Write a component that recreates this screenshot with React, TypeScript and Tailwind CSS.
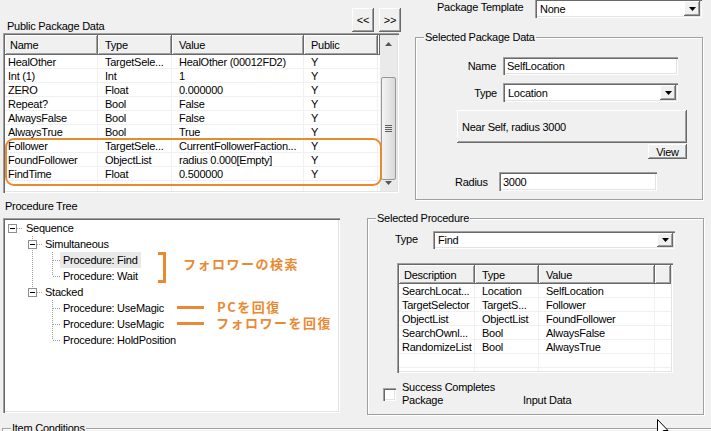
import React from "react";

// classic win32 bevels
const raised =
  "shadow-[inset_-1px_-1px_0_#696969,inset_1px_1px_0_#ffffff,inset_-2px_-2px_0_#a0a0a0]";
const sunken =
  "shadow-[inset_1px_1px_0_#a0a0a0,inset_2px_2px_0_#696969,inset_-1px_-1px_0_#ffffff,inset_-2px_-2px_0_#e3e3e3]";

type Col = { label: string; w: string };

const packageCols: Col[] = [
  { label: "Name", w: "w-[93px]" },
  { label: "Type", w: "w-[74px]" },
  { label: "Value", w: "w-[132px]" },
  { label: "Public", w: "w-[74px]" },
];

const packageRows = [
  ["HealOther", "TargetSele...", "HealOther (00012FD2)", "Y"],
  ["Int (1)", "Int", "1", "Y"],
  ["ZERO", "Float", "0.000000", "Y"],
  ["Repeat?", "Bool", "False", "Y"],
  ["AlwaysFalse", "Bool", "False", "Y"],
  ["AlwaysTrue", "Bool", "True", "Y"],
  ["Follower", "TargetSele...", "CurrentFollowerFaction...", "Y"],
  ["FoundFollower", "ObjectList", "radius 0.000[Empty]", "Y"],
  ["FindTime", "Float", "0.500000", "Y"],
  ["", "", "", ""],
];

const procCols: Col[] = [
  { label: "Description", w: "w-[76px]" },
  { label: "Type", w: "w-[64px]" },
  { label: "Value", w: "w-[116px]" },
];

const procRows = [
  ["SearchLocat...", "Location", "SelfLocation"],
  ["TargetSelector", "TargetS...", "Follower"],
  ["ObjectList", "ObjectList", "FoundFollower"],
  ["SearchOwnl...", "Bool", "AlwaysFalse"],
  ["RandomizeList", "Bool", "AlwaysTrue"],
  ["", "", ""],
  ["", "", ""],
];

const tree = [
  { label: "Sequence", lvl: 0 },
  { label: "Simultaneous", lvl: 1 },
  { label: "Procedure: Find", lvl: 2, sel: true },
  { label: "Procedure: Wait", lvl: 2 },
  { label: "Stacked", lvl: 1 },
  { label: "Procedure: UseMagic", lvl: 2 },
  { label: "Procedure: UseMagic", lvl: 2 },
  { label: "Procedure: HoldPosition", lvl: 2 },
];
const treePad = ["pl-[18px]", "pl-[37px]", "pl-[55px]"];

function Tri({ up = false, color = "#000000" }: { up?: boolean; color?: string }) {
  return (
    <svg width="7" height="4" viewBox="0 0 7 4">
      <path d={up ? "M0 4h7L3.5 0z" : "M0 0h7L3.5 4z"} fill={color} />
    </svg>
  );
}

function Btn({ className = "", children }: { className?: string; children: React.ReactNode }) {
  return (
    <div className={`flex items-center justify-center bg-[#f0f0f0] ${raised} ${className}`}>
      {children}
    </div>
  );
}

function Field({ value, className = "" }: { value: string; className?: string }) {
  return (
    <div className={`flex items-center bg-white p-[2px] pl-[4px] ${sunken} ${className}`}>
      {value}
    </div>
  );
}

function Combo({ value, className = "" }: { value: string; className?: string }) {
  return (
    <div className={`flex bg-white p-[2px] ${sunken} ${className}`}>
      <span className="flex flex-1 items-center pl-[3px]">{value}</span>
      <span className={`flex w-[16px] items-center justify-center bg-[#f0f0f0] ${raised}`}>
        <Tri />
      </span>
    </div>
  );
}

function Group({
  label,
  className = "",
  children,
}: {
  label: string;
  className?: string;
  children?: React.ReactNode;
}) {
  return (
    <div
      className={`flex flex-col border border-[#a0a0a0] shadow-[inset_1px_1px_0_#ffffff,1px_1px_0_#ffffff] ${className}`}
    >
      <div className="-mt-[8px] ml-[8px] w-fit bg-[#f0f0f0] px-[1px]">{label}</div>
      {children}
    </div>
  );
}

function ScrollBar() {
  return (
    <div className="flex w-[17px] flex-col bg-[#eaeaea]">
      <div className="flex h-[17px] items-center justify-center">
        <Tri up color="#555555" />
      </div>
      <div className="mt-[25px] flex h-[103px] items-center justify-center rounded-[2px] border border-[#979797] bg-gradient-to-r from-[#f4f4f4] to-[#d9d9d9] mx-[1px]">
        <div className="flex flex-col gap-[1px]">
          <div className="h-[1px] w-[7px] bg-[#5f5f5f]" />
          <div className="h-[1px] w-[7px] bg-[#5f5f5f]" />
          <div className="h-[1px] w-[7px] bg-[#5f5f5f]" />
          <div className="h-[1px] w-[7px] bg-[#5f5f5f]" />
        </div>
      </div>
      <div className="flex flex-1 justify-center pt-[1px]">
        <Tri color="#555555" />
      </div>
    </div>
  );
}

function ListView({
  cols,
  rows,
  headH,
  scroll = false,
  className = "",
}: {
  cols: Col[];
  rows: string[][];
  headH: string;
  scroll?: boolean;
  className?: string;
}) {
  return (
    <div className={`flex bg-white p-[2px] ${sunken} ${className}`}>
      <div className="flex flex-1 flex-col overflow-hidden">
        <div className={`flex shrink-0 ${headH}`}>
          {cols.map((c, i) => (
            <div
              key={i}
              className={`flex items-center overflow-hidden whitespace-nowrap bg-[#f0f0f0] ${raised} ${c.w} ${
                i === 0 ? "pl-[5px]" : "pl-[7px]"
              }`}
            >
              {c.label}
            </div>
          ))}
          <div className={`flex-1 bg-[#f0f0f0] ${raised}`} />
        </div>
        {rows.map((r, ri) => (
          <div key={ri} className="flex h-[14px] shrink-0">
            {cols.map((c, i) => (
              <div
                key={i}
                className={`flex items-center overflow-hidden whitespace-nowrap border-r border-b border-[#f0f0f0] ${c.w} ${
                  i === 0 ? "pl-[3px]" : "pl-[7px]"
                }`}
              >
                {r[i]}
              </div>
            ))}
            <div className="flex-1 border-b border-[#f0f0f0]" />
          </div>
        ))}
      </div>
      {scroll && <ScrollBar />}
    </div>
  );
}

function TreeLines() {
  const boxes = [
    { a: 3, cy: 8 },
    { a: 23, cy: 24 },
    { a: 23, cy: 72 },
  ];
  const dot = { stroke: "#a0a0a0", strokeWidth: 1, strokeDasharray: "1 1" };
  return (
    <svg className="pointer-events-none absolute left-0 top-0" width="60" height="130">
      <line x1="12" y1="8.5" x2="18" y2="8.5" {...dot} />
      <line x1="27.5" y1="16" x2="27.5" y2="72" {...dot} />
      <line x1="32" y1="24.5" x2="38" y2="24.5" {...dot} />
      <line x1="32" y1="72.5" x2="38" y2="72.5" {...dot} />
      <line x1="47.5" y1="32" x2="47.5" y2="56" {...dot} />
      <line x1="47.5" y1="80" x2="47.5" y2="120" {...dot} />
      {[40, 56, 88, 104, 120].map((y) => (
        <line key={y} x1="48" y1={y + 0.5} x2="55" y2={y + 0.5} {...dot} />
      ))}
      {boxes.map((b, i) => (
        <g key={i}>
          <rect x={b.a + 0.5} y={b.cy - 3.5} width="8" height="8" fill="#ffffff" stroke="#8e8e8e" />
          <line x1={b.a + 2} y1={b.cy + 0.5} x2={b.a + 7} y2={b.cy + 0.5} stroke="#000000" />
        </g>
      ))}
    </svg>
  );
}

export default function App() {
  const jp =
    "absolute whitespace-nowrap font-['Noto_Sans_CJK_JP',sans-serif] text-[13px] leading-[14px] font-bold tracking-[1.5px] text-[#e98a32]";
  return (
    <div className="relative h-[431px] w-[711px] overflow-hidden bg-[#f0f0f0] font-['Liberation_Sans',Arial,sans-serif] text-[11px] leading-[14px] tracking-[-0.25px] text-black">
      {/* upper half */}
      <div className="flex h-[200px]">
        <div className="flex w-[402px] flex-col">
          <div className="flex h-[33px]">
            <span className="pl-[7px] pt-[19px]">Public Package Data</span>
            <div className="ml-auto mr-[1px] mt-[8px] flex gap-[5px]">
              <Btn className="h-[24px] w-[22px]">&lt;&lt;</Btn>
              <Btn className="h-[24px] w-[22px]">&gt;&gt;</Btn>
            </div>
          </div>
          <ListView
            cols={packageCols}
            rows={packageRows}
            headH="h-[20px]"
            scroll
            className="ml-[3px] h-[160px] w-[396px]"
          />
        </div>

        <div className="flex flex-1 flex-col">
          <div className="-mt-[1px] flex h-[19px]">
            <span className="ml-[35px] mt-[1px]">Package Template</span>
            <Combo value="None" className="ml-auto mr-[9px] h-[19px] w-[167px]" />
          </div>
          <Group label="Selected Package Data" className="ml-[13px] mt-[19px] h-[163px] w-[288px]">
            <div className="ml-[41px] mt-[13px] flex items-center">
              <span className="w-[46px] pr-[7px] text-right">Name</span>
              <Field value="SelfLocation" className="h-[18px] w-[175px]" />
            </div>
            <div className="ml-[41px] mt-[8px] flex items-center">
              <span className="w-[46px] pr-[6px] text-right">Type</span>
              <Combo value="Location" className="h-[19px] w-[175px]" />
            </div>
            <Btn className="ml-[41px] mt-[8px] h-[33px] w-[230px] !justify-start pl-[5px]">
              Near Self, radius 3000
            </Btn>
            <Btn className="ml-[232px] mt-[1px] h-[15px] w-[39px]">View</Btn>
            <div className="ml-[39px] mt-[13px] flex items-center">
              <span className="w-[44px]">Radius</span>
              <Field value="3000" className="h-[19px] w-[158px]" />
            </div>
          </Group>
        </div>
      </div>

      {/* lower half */}
      <div className="flex h-[215px]">
        <div className="flex w-[367px] flex-col">
          <span className="pl-[5px] leading-[12px]">Procedure Tree</span>
          <div className={`ml-[3px] mt-[6px] h-[195px] w-[337px] bg-white p-[2px] ${sunken}`}>
            <div className="relative h-full">
              {tree.map((t, i) => (
                <div key={i} className={`flex h-[16px] ${treePad[t.lvl]}`}>
                  <span className={`flex items-center px-[3px] ${t.sel ? "bg-[#e9e9e9]" : ""}`}>
                    {t.label}
                  </span>
                </div>
              ))}
              <TreeLines />
            </div>
          </div>
        </div>

        <Group label="Selected Procedure" className="mt-[18px] h-[197px] w-[337px]">
          <div className="ml-[27px] mt-[6px] flex items-center">
            <span className="-mt-[2px] w-[38px]">Type</span>
            <Combo value="Find" className="h-[18px] w-[242px]" />
          </div>
          <ListView
            cols={procCols}
            rows={procRows}
            headH="h-[19px]"
            className="ml-[29px] mt-[14px] h-[110px] w-[276px]"
          />
          <div className="ml-[15px] mt-[8px] flex items-center">
            <span className={`h-[13px] w-[13px] bg-white ${sunken}`} />
            <div className="ml-[6px] w-[121px] leading-[13px]">
              Success Completes
              <br />
              Package
            </div>
            <span className="self-end leading-[13px]">Input Data</span>
          </div>
        </Group>
      </div>

      {/* Item Conditions group, cut off by the window */}
      <div className="ml-[2px] mt-[13px] h-[20px] border-l border-t border-[#a0a0a0] shadow-[inset_1px_1px_0_#ffffff]">
        <div className="-mt-[8px] ml-[8px] w-fit bg-[#f0f0f0] px-[1px]">Item Conditions</div>
      </div>

      {/* orange annotations */}
      <div className="absolute left-[5px] top-[138px] h-[48px] w-[377px] rounded-[9px] border-2 border-[#e98a32]" />
      <div className="absolute left-[158px] top-[252px] h-[31px] w-[8px] border-b-[3px] border-r-[3px] border-t-[3px] border-[#e98a32]" />
      <span className={`${jp} left-[183px] top-[257px]`}>フォロワーの検索</span>
      <div className="absolute left-[177px] top-[306px] h-[3px] w-[27px] bg-[#e98a32]" />
      <span className={`${jp} left-[217px] top-[300px]`}>PCを回復</span>
      <div className="absolute left-[177px] top-[322px] h-[3px] w-[27px] bg-[#e98a32]" />
      <span className={`${jp} left-[216px] top-[316px]`}>フォロワーを回復</span>

      {/* mouse pointer */}
      <svg className="absolute left-[657px] top-[419px]" width="13" height="20" viewBox="0 0 13 20">
        <path d="M0.5 0.5V16L4 12.5L6.5 18.5L8.8 17.5L6.3 11.5H11Z" fill="#ffffff" stroke="#000000" />
      </svg>
    </div>
  );
}
